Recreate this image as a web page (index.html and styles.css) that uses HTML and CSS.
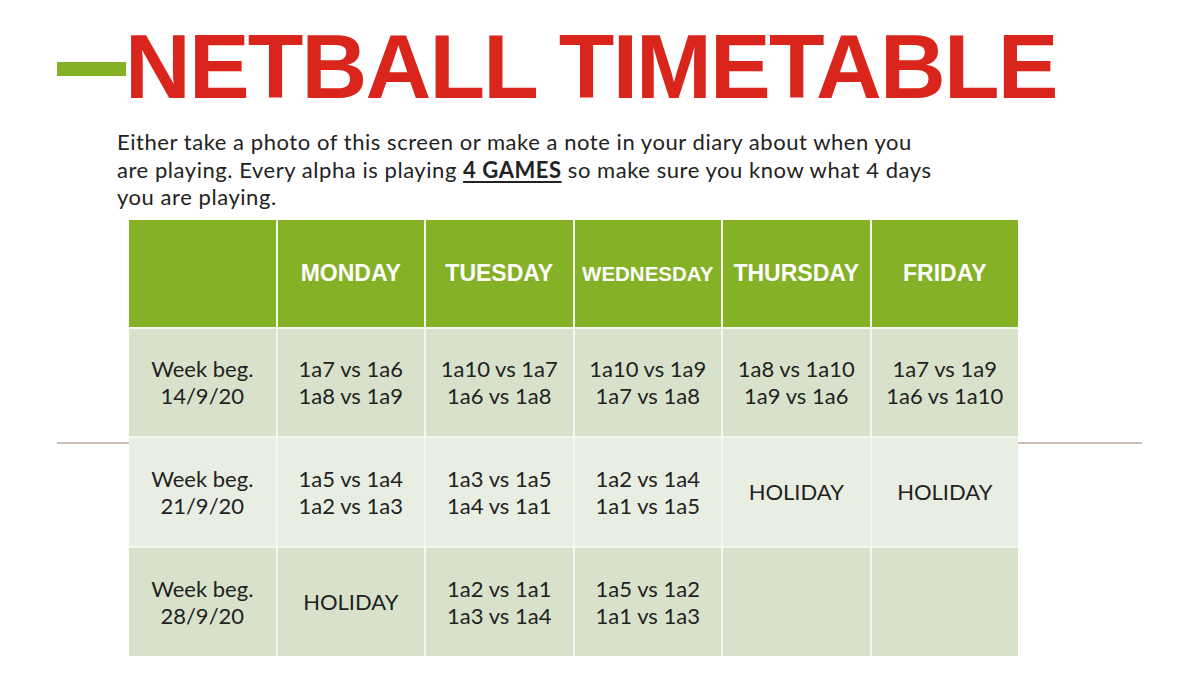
FILE: index.html
```html
<!DOCTYPE html>
<html>
<head>
<meta charset="utf-8">
<link rel="stylesheet" href="styles.css">
</head>
<body>
<div class="page">
  <div class="divider"></div>
  <header class="title-row">
    <span class="bar"></span>
    <h1 class="title">NETBALL TIMETABLE</h1>
  </header>
  <p class="intro">Either take a photo of this screen or make a note in your diary about when you<br>are playing. Every alpha is playing <strong class="games">4 GAMES</strong> so make sure you know what 4 days<br>you are playing.</p>
  <div class="table">
    <div class="cell head"></div>
    <div class="cell head">MONDAY</div>
    <div class="cell head">TUESDAY</div>
    <div class="cell head small">WEDNESDAY</div>
    <div class="cell head">THURSDAY</div>
    <div class="cell head">FRIDAY</div>

    <div class="cell dark">Week beg.<br>14/9/20</div>
    <div class="cell dark">1a7 vs 1a6<br>1a8 vs 1a9</div>
    <div class="cell dark">1a10 vs 1a7<br>1a6 vs 1a8</div>
    <div class="cell dark">1a10 vs 1a9<br>1a7 vs 1a8</div>
    <div class="cell dark">1a8 vs 1a10<br>1a9 vs 1a6</div>
    <div class="cell dark">1a7 vs 1a9<br>1a6 vs 1a10</div>

    <div class="cell light">Week beg.<br>21/9/20</div>
    <div class="cell light">1a5 vs 1a4<br>1a2 vs 1a3</div>
    <div class="cell light">1a3 vs 1a5<br>1a4 vs 1a1</div>
    <div class="cell light">1a2 vs 1a4<br>1a1 vs 1a5</div>
    <div class="cell light">HOLIDAY</div>
    <div class="cell light">HOLIDAY</div>

    <div class="cell dark">Week beg.<br>28/9/20</div>
    <div class="cell dark">HOLIDAY</div>
    <div class="cell dark">1a2 vs 1a1<br>1a3 vs 1a4</div>
    <div class="cell dark">1a5 vs 1a2<br>1a1 vs 1a3</div>
    <div class="cell dark"></div>
    <div class="cell dark"></div>
  </div>
</div>
</body>
</html>
```
FILE: styles.css
```css
html, body {
  margin: 0;
  padding: 0;
  background: #ffffff;
}
.page {
  position: relative;
  width: 1200px;
  height: 675px;
  overflow: hidden;
}
.divider {
  position: absolute;
  left: 57px;
  top: 442px;
  width: 1085px;
  height: 2px;
  background: #cdbdb5;
}
.title-row {
  display: flex;
  align-items: center;
  padding: 21px 0 0 57px;
}
.bar {
  width: 69px;
  height: 14px;
  margin-top: 4px;
  background: #84b125;
}
.title {
  margin: 0 0 0 -1px;
  font-family: "Liberation Sans", Arial, sans-serif;
  font-weight: 700;
  font-size: 91px;
  line-height: 91px;
  letter-spacing: -1.8px;
  color: #d9251c;
}
.intro {
  margin: 16px 0 0 117px;
  font-family: Lato, "Liberation Sans", sans-serif;
  font-size: 22px;
  line-height: 27.5px;
  letter-spacing: 0.55px;
  color: #222222;
}
.games {
  font-weight: 700;
  text-decoration: underline;
  text-underline-offset: 3px;
}
.table {
  position: relative;
  margin: 9px 0 0 129px;
  width: 889px;
  display: grid;
  grid-template-columns: repeat(6, 1fr);
  grid-template-rows: 107px 107px 108px 108px;
  gap: 2px;
  background: #f4f6f0;
}
.cell {
  display: flex;
  align-items: center;
  justify-content: center;
  text-align: center;
  font-family: Lato, "Liberation Sans", sans-serif;
  font-size: 22px;
  line-height: 27px;
  color: #222222;
}
.head {
  background: #84b125;
  color: #ffffff;
  font-family: "Liberation Sans", Arial, sans-serif;
  font-weight: 700;
  font-size: 23px;
}
.head.small {
  font-size: 20.5px;
}
.dark {
  background: #d8e2cb;
}
.light {
  background: #e9eee2;
}
```
